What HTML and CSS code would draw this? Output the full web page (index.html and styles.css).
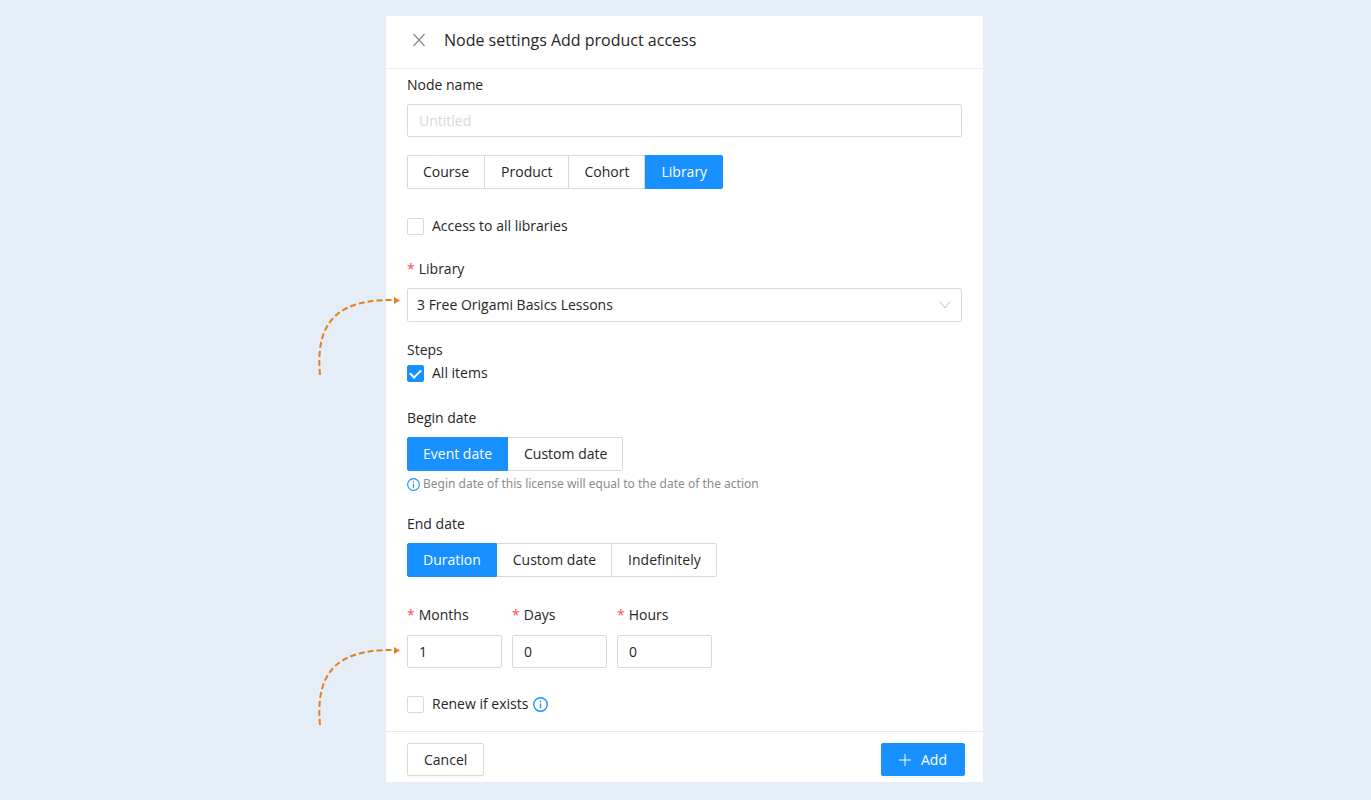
FILE: index.html
```html
<!DOCTYPE html>
<html lang="en">
  <head>
    <meta charset="UTF-8" />
    <meta name="viewport" content="width=device-width, initial-scale=1.0" />
    <title>Node settings</title>
    <link rel="stylesheet" href="styles.css">
  </head>
  <body>
    <form class="panel" action="/">
      <header class="panel-header">
        <button class="close" type="button" aria-label="Close">
          <svg width="14" height="14" viewBox="0 0 14 14">
            <path d="M1.5 1L12.5 13M12.5 1L1.5 13" />
          </svg>
        </button>
        <h1>Node settings Add product access</h1>
      </header>

      <main class="panel-body">
        <div class="field name-field">
          <label for="name">Node name</label>
          <input id="name" class="text-input" type="text" placeholder="Untitled" />
        </div>

        <div class="segmented type-switch">
          <label><input type="radio" name="type" />Course</label>
          <label><input type="radio" name="type" />Product</label>
          <label><input type="radio" name="type" />Cohort</label>
          <label><input type="radio" name="type" checked />Library</label>
        </div>

        <label class="check all-libraries"><input type="checkbox" />Access to all libraries</label>

        <div class="field library-field">
          <label class="required" for="library">Library</label>
          <div class="select">
            <select id="library">
              <option>3 Free Origami Basics Lessons</option>
            </select>
            <svg class="chevron" width="12" height="10" viewBox="0 0 12 10">
              <path d="M1 1.5L6 8L11 1.5" />
            </svg>
          </div>
          <svg class="arrow" width="86" height="82" viewBox="0 0 86 82">
            <path class="arrow-line" d="M5 80C1 36 14 4 78 5" />
            <path class="arrow-head" d="M79 2L85 5.500L79 9Z" />
          </svg>
        </div>

        <div class="steps">
          <div>Steps</div>
          <label class="check"><input type="checkbox" checked />All items</label>
        </div>

        <div class="field begin-field">
          <div class="label">Begin date</div>
          <div class="segmented">
            <label><input type="radio" name="begin" checked />Event date</label>
            <label><input type="radio" name="begin" />Custom date</label>
          </div>
          <div class="help">
            <svg class="info" width="13" height="13" viewBox="0 0 16 16">
              <circle cx="8" cy="8" r="7.200" />
              <path d="M8 7V12M8 4V5.500" />
            </svg>
            Begin date of this license will equal to the date of the action
          </div>
        </div>

        <div class="field end-field">
          <div class="label">End date</div>
          <div class="segmented">
            <label><input type="radio" name="end" checked />Duration</label>
            <label><input type="radio" name="end" />Custom date</label>
            <label><input type="radio" name="end" />Indefinitely</label>
          </div>
        </div>

        <div class="duration">
          <div class="field">
            <label class="required" for="months">Months</label>
            <input id="months" class="text-input" type="text" value="1" />
          </div>
          <div class="field">
            <label class="required" for="days">Days</label>
            <input id="days" class="text-input" type="text" value="0" />
          </div>
          <div class="field">
            <label class="required" for="hours">Hours</label>
            <input id="hours" class="text-input" type="text" value="0" />
          </div>
          <svg class="arrow" width="86" height="82" viewBox="0 0 86 82">
            <path class="arrow-line" d="M5 80C1 36 14 4 78 5" />
            <path class="arrow-head" d="M79 2L85 5.500L79 9Z" />
          </svg>
        </div>

        <div class="renew">
          <label class="check"><input type="checkbox" />Renew if exists</label>
          <svg class="info" width="15" height="15" viewBox="0 0 16 16">
            <circle cx="8" cy="8" r="7.200" />
            <path d="M8 7V12M8 4V5.500" />
          </svg>
        </div>
      </main>

      <footer class="panel-footer">
        <button class="btn" type="button">Cancel</button>
        <button class="btn btn-primary" type="submit">
          <svg width="12" height="12" viewBox="0 0 12 12">
            <path d="M6 0V12M0 6H12" />
          </svg>
          Add
        </button>
      </footer>
    </form>
  </body>
</html>
```
FILE: styles.css
```css
* {
  box-sizing: border-box;
}

body {
  margin: 0;
  padding: 16px 18px 16px 16px;
  background-color: #e5edf6;
  color: #262626;
  font-family: "Open Sans", "Noto Sans", sans-serif;
  font-size: 14px;
  line-height: 22px;
}

input,
select,
button {
  font: inherit;
  color: inherit;
}

svg {
  fill: none;
}

.panel {
  max-width: 597px;
  margin: 0 auto;
  background-color: white;
}

.panel-header {
  display: flex;
  align-items: center;
  gap: 18px;
  padding: 12px 26px 16px;
  border-bottom: 1px solid #f0f0f0;
}

.panel-header h1 {
  margin: 0;
  font-size: 16px;
  font-weight: 400;
  line-height: 24px;
}

.close {
  display: flex;
  padding: 0;
  border: none;
  background: none;
}

.close svg {
  stroke: #8c8c8c;
  stroke-width: 1.3;
}

.panel-body {
  padding: 5px 21px 16px;
}

.field {
  display: flex;
  flex-direction: column;
}

.field > label,
.label {
  margin-bottom: 8px;
}

.required::before {
  content: "*";
  margin-right: 4px;
  color: #ff4d4f;
}

.text-input {
  width: 100%;
  height: 33px;
  padding: 0 11px;
  border: 1px solid #d9d9d9;
  border-radius: 2px;
  background-color: white;
}

.text-input::placeholder {
  color: #d9d9d9;
}

.segmented {
  display: flex;
}

.segmented label {
  padding: 5px 15px 5px 16px;
  border: 1px solid #d9d9d9;
  border-left-width: 0;
}

.segmented label:first-child {
  padding-left: 15px;
  border-left-width: 1px;
  border-radius: 2px 0 0 2px;
}

.segmented label:last-child {
  border-radius: 0 2px 2px 0;
}

.segmented label:has(:checked) {
  border-color: #1890ff;
  background-color: #1890ff;
  color: white;
}

.segmented input {
  position: absolute;
  opacity: 0;
}

.check {
  display: flex;
  align-items: center;
  gap: 8px;
}

.check input {
  appearance: none;
  display: grid;
  place-items: center;
  width: 17px;
  height: 17px;
  margin: 0;
  border: 1px solid #d9d9d9;
  border-radius: 2px;
}

.check input:checked {
  border-color: #1890ff;
  background-color: #1890ff;
}

.check input:checked::after {
  content: "";
  width: 9px;
  height: 5px;
  margin-bottom: 2px;
  border: solid white;
  border-width: 0 0 2px 2px;
  transform: rotate(-45deg);
}

.name-field {
  margin-bottom: 18px;
}

.type-switch {
  margin-bottom: 26px;
}

.all-libraries {
  margin-bottom: 21px;
}

.library-field {
  position: relative;
  margin-bottom: 17px;
}

.select {
  display: grid;
  align-items: center;
}

.select select,
.chevron {
  grid-area: 1 / 1;
}

.select select {
  appearance: none;
  width: 100%;
  height: 34px;
  padding: 0 9px;
  border: 1px solid #d9d9d9;
  border-radius: 2px;
  background-color: white;
}

.chevron {
  justify-self: end;
  margin-right: 11px;
  stroke: #bfbfbf;
}

/* dashed pointers beside the panel */
.arrow {
  position: absolute;
  top: 37px;
  left: -92px;
}

.duration .arrow {
  top: 41px;
}

.arrow-line {
  stroke: #e67e22;
  stroke-width: 2;
  stroke-dasharray: 6 3;
}

.arrow-head {
  fill: #e67e22;
}

.steps {
  display: grid;
  gap: 1px;
  margin-bottom: 23px;
}

.begin-field {
  margin-bottom: 18px;
}

.help {
  display: flex;
  align-items: center;
  gap: 3px;
  margin-top: 2px;
  color: #8c8c8c;
  font-family: "Noto Sans", sans-serif;
  font-size: 12px;
}

.info {
  stroke: #1890ff;
  stroke-width: 1.4;
}

.end-field {
  margin-bottom: 27px;
}

.duration {
  position: relative;
  display: grid;
  grid-template-columns: repeat(3, 95px);
  gap: 10px;
  margin-bottom: 25px;
}

.duration label {
  margin-bottom: 9px;
}

.renew {
  display: flex;
  align-items: center;
  gap: 5px;
}

.panel-footer {
  display: flex;
  justify-content: space-between;
  padding: 11px 18px 6px 21px;
  border-top: 1px solid #e8e8e8;
}

.btn {
  display: flex;
  align-items: center;
  height: 33px;
  padding: 0 16px;
  border: 1px solid #d9d9d9;
  border-radius: 2px;
  background-color: white;
  box-shadow: 0 2px 0 rgba(0, 0, 0, 0.02);
}

.btn-primary {
  gap: 10px;
  padding: 0 17px;
  border-color: #1890ff;
  background-color: #1890ff;
  box-shadow: 0 2px 0 rgba(0, 0, 0, 0.04);
  color: white;
}

.btn-primary svg {
  stroke: white;
}
```
